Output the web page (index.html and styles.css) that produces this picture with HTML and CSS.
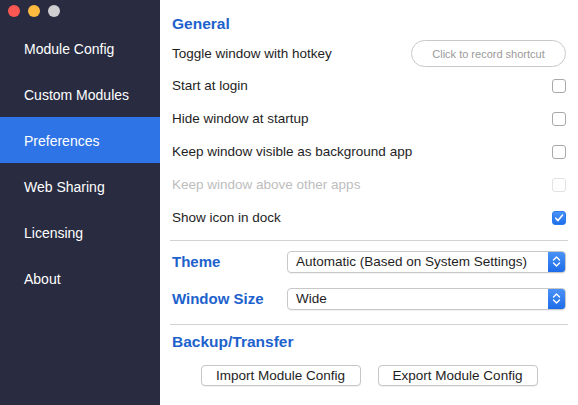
FILE: index.html
```html
<!DOCTYPE html>
<html lang="en">
<head>
  <meta charset="UTF-8" />
  <title>Preferences</title>
  <link rel="stylesheet" href="styles.css">
</head>
<body>
  <div class="sidebar">
    <div class="titlebar">
      <span class="dot red"></span>
      <span class="dot yellow"></span>
      <span class="dot gray"></span>
    </div>
    <button class="nav">Module Config</button>
    <button class="nav">Custom Modules</button>
    <button class="nav active">Preferences</button>
    <button class="nav">Web Sharing</button>
    <button class="nav">Licensing</button>
    <button class="nav">About</button>
  </div>

  <div class="content">
    <h2 class="section">General</h2>

    <div class="row first">
      <span>Toggle window with hotkey</span>
      <button class="shortcut">Click to record shortcut</button>
    </div>
    <div class="row">
      <span>Start at login</span>
      <span class="check"></span>
    </div>
    <div class="row">
      <span>Hide window at startup</span>
      <span class="check"></span>
    </div>
    <div class="row">
      <span>Keep window visible as background app</span>
      <span class="check"></span>
    </div>
    <div class="row disabled">
      <span>Keep window above other apps</span>
      <span class="check"></span>
    </div>
    <div class="row">
      <span>Show icon in dock</span>
      <span class="check checked">
        <svg width="10" height="10" viewBox="0 0 10 10"><path d="M1.8 5.2 L4 7.6 L8.4 2.2" fill="none" stroke="#fff" stroke-width="1.6" stroke-linecap="round" stroke-linejoin="round"/></svg>
      </span>
    </div>

    <hr class="divider" />

    <div class="field top">
      <h2 class="section">Theme</h2>
      <div class="select">
        <span>Automatic (Based on System Settings)</span>
        <span class="arrows">
          <svg width="9" height="13" viewBox="0 0 9 13"><path d="M1.5 5 L4.5 2 L7.5 5 M1.5 8 L4.5 11 L7.5 8" fill="none" stroke="#fff" stroke-width="1.4" stroke-linecap="round" stroke-linejoin="round"/></svg>
        </span>
      </div>
    </div>
    <div class="field">
      <h2 class="section">Window Size</h2>
      <div class="select">
        <span>Wide</span>
        <span class="arrows">
          <svg width="9" height="13" viewBox="0 0 9 13"><path d="M1.5 5 L4.5 2 L7.5 5 M1.5 8 L4.5 11 L7.5 8" fill="none" stroke="#fff" stroke-width="1.4" stroke-linecap="round" stroke-linejoin="round"/></svg>
        </span>
      </div>
    </div>

    <hr class="divider second" />

    <h2 class="section">Backup/Transfer</h2>
    <div class="actions">
      <button class="btn">Import Module Config</button>
      <button class="btn">Export Module Config</button>
    </div>
  </div>
</body>
</html>
```

FILE: styles.css
```css
body {
  font-family: "Liberation Sans", Arial, sans-serif;
  margin: 0;
  display: flex;
  width: 578px;
  height: 405px;
  overflow: hidden;
  background: #fff;
}
.sidebar {
  width: 160px;
  flex: none;
  height: 405px;
  background-color: #292c41;
  display: flex;
  flex-direction: column;
}
.titlebar {
  height: 25px;
  display: flex;
  gap: 8px;
  padding: 5px 0 0 8px;
  box-sizing: border-box;
}
.dot {
  width: 12px;
  height: 12px;
  border-radius: 50%;
}
.dot.red { background: #fc5753; }
.dot.yellow { background: #fdbc40; }
.dot.gray { background: #cfcfd1; }
.nav {
  display: block;
  width: 100%;
  height: 46px;
  padding: 2px 0 0 24px;
  background: none;
  border: none;
  color: #fff;
  text-align: left;
  font-family: inherit;
  font-size: 14px;
  cursor: pointer;
}
.nav.active {
  background-color: #2e74e6;
}
.content {
  flex: 1;
  padding: 13px 10px 0 10px;
  color: #1e1e1e;
  font-size: 13.5px;
}
.section {
  margin: 0;
  padding-left: 2px;
  height: 22px;
  line-height: 22px;
  font-size: 15.5px;
  font-weight: bold;
  color: #1d62cc;
}
.row {
  display: flex;
  align-items: center;
  justify-content: space-between;
  height: 33px;
  padding: 0 2px;
}
.row.first {
  height: 31px;
  margin-top: 3px;
}
.row.disabled {
  color: #bdbdbd;
}
.shortcut {
  width: 155px;
  height: 27px;
  border: 1px solid #c9c9c9;
  border-radius: 14px;
  background: #fff;
  color: #9a9a9a;
  font-family: inherit;
  font-size: 11px;
  padding: 0;
}
.check {
  width: 12px;
  height: 12px;
  border: 1px solid #a9a9a9;
  border-radius: 3px;
  background: #fff;
  display: flex;
  align-items: center;
  justify-content: center;
}
.row.disabled .check {
  border-color: #e2e2e2;
}
.check.checked {
  border-color: #2a79f0;
  background: linear-gradient(#4b93f8, #1f6fe9);
}
.divider {
  border: none;
  border-top: 1px solid #d2d2d2;
  margin: 6px 0 0 0;
}
.divider.second {
  margin-top: 7px;
  margin-bottom: 6px;
}
.field {
  display: flex;
  align-items: center;
  height: 37px;
}
.field.top {
  margin-top: 2px;
}
.field .section {
  width: 115px;
  flex: none;
  font-size: 15px;
}
.select {
  flex: 1;
  height: 20px;
  margin-right: 2px;
  border: 1px solid #c8c8c8;
  border-radius: 4px;
  display: flex;
  align-items: center;
  justify-content: space-between;
  padding-left: 8px;
  overflow: hidden;
  box-shadow: 0 1px 1px rgba(0, 0, 0, 0.06);
}
.arrows {
  width: 17px;
  height: 100%;
  background: linear-gradient(#4a92f8, #1d6ce8);
  display: flex;
  align-items: center;
  justify-content: center;
}
.actions {
  display: flex;
  justify-content: center;
  gap: 17px;
  margin-top: 12px;
}
.btn {
  width: 160px;
  height: 21px;
  padding: 0;
  border: 1px solid #c6c6c6;
  border-radius: 4px;
  background: #fff;
  color: #1e1e1e;
  font-family: inherit;
  font-size: 13.5px;
  box-shadow: 0 1px 1px rgba(0, 0, 0, 0.06);
}
```
